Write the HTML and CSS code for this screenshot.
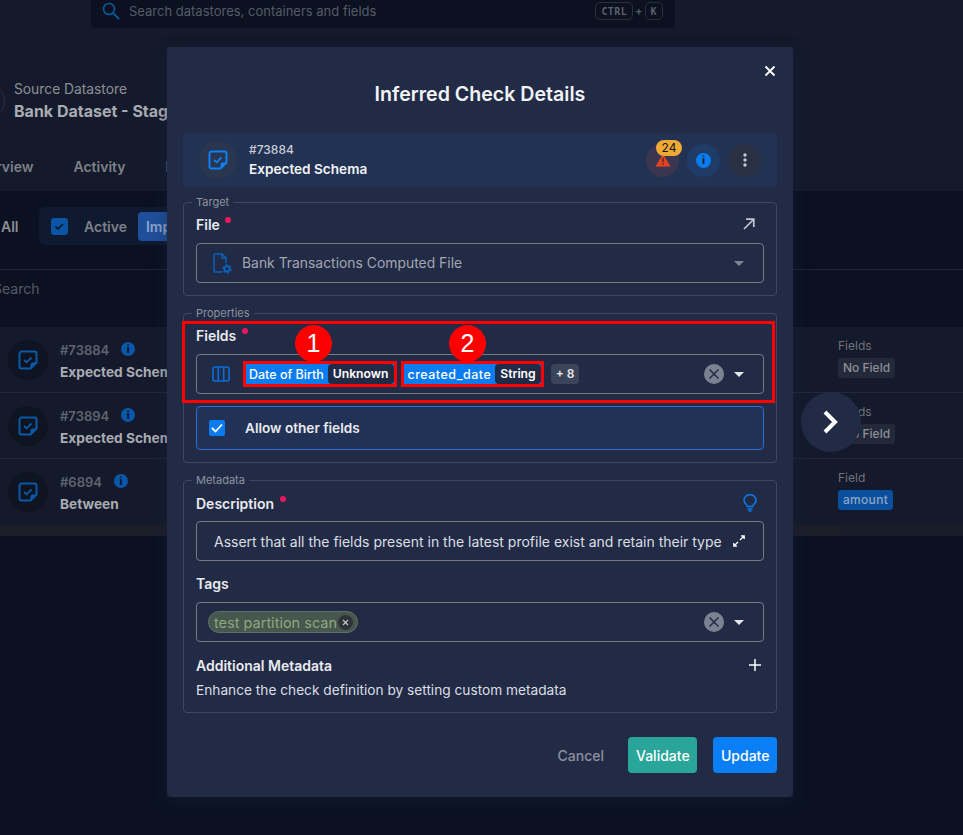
FILE: index.html
```html
<!DOCTYPE html>
<html lang="en">
<head>
    <meta charset="UTF-8">
    <meta name="viewport" content="width=device-width, initial-scale=1.0">
    <title>Inferred Check Details</title>
    <link rel="stylesheet" href="styles.css">
</head>
<body>
    <svg class="defs" width="0" height="0">
        <symbol id="check-icon" viewBox="0 0 20 20">
            <path d="M3.500 1.500h13a2 2 0 0 1 2 2v9l-6 6h-9a2 2 0 0 1-2-2v-13a2 2 0 0 1 2-2z" fill="none" stroke="currentColor" stroke-width="2"/>
            <path d="M18.500 12.500h-4a2 2 0 0 0-2 2v4z" fill="currentColor"/>
            <path d="M6 10l2.600 2.300L13.500 7.500" fill="none" stroke="currentColor" stroke-width="1.800"/>
        </symbol>
        <symbol id="clear-icon" viewBox="0 0 20 20">
            <circle cx="10" cy="10" r="10" fill="#7d8292"/>
            <path d="M5.500 5.500l9 9M14.500 5.500l-9 9" stroke="#222b46" stroke-width="1.500"/>
        </symbol>
    </svg>

    <div class="topbar">
        <div class="global-search">
            <svg class="search-icon" width="18" height="18" viewBox="0 0 18 18"><circle cx="7" cy="7" r="5.500" fill="none" stroke="currentColor" stroke-width="1.600"/><path d="M11 11l6 6" stroke="currentColor" stroke-width="1.800"/></svg>
            <span class="search-text">Search datastores, containers and fields</span>
            <span class="keys"><kbd>CTRL</kbd><i>+</i><kbd>K</kbd></span>
        </div>
    </div>

    <div class="page-head">
        <div class="datastore">
            <div class="datastore-logo"></div>
            <div>
                <div class="datastore-type">Source Datastore</div>
                <div class="datastore-name">Bank Dataset - Staging</div>
            </div>
        </div>
        <div class="tabs">
            <span>Overview</span>
            <span>Activity</span>
            <span>Profiles</span>
        </div>
    </div>

    <div class="filters">
        <span class="filter-all">All</span>
        <div class="filter-pill">
            <span class="filter-box"><svg width="11" height="11" viewBox="0 0 11 11"><path d="M1.500 5.500l2.500 2.500 5-5" fill="none" stroke="#0b1120" stroke-width="1.500"/></svg></span>
            <span class="filter-active">Active</span>
            <span class="filter-imp">Important</span>
        </div>
    </div>

    <div class="list-search">Search</div>

    <div class="table">
        <div class="row">
            <div class="row-icon"><svg width="20" height="20"><use href="#check-icon"/></svg></div>
            <div class="row-info">
                <div class="row-id">#73884 <span class="dot-info">i</span></div>
                <div class="row-name">Expected Schema</div>
            </div>
            <div class="row-fields">
                <div class="row-label">Fields</div>
                <span class="row-tag">No Field</span>
            </div>
        </div>
        <div class="row">
            <div class="row-icon"><svg width="20" height="20"><use href="#check-icon"/></svg></div>
            <div class="row-info">
                <div class="row-id">#73894 <span class="dot-info">i</span></div>
                <div class="row-name">Expected Schema</div>
            </div>
            <div class="row-fields">
                <div class="row-label">Fields</div>
                <span class="row-tag">No Field</span>
            </div>
        </div>
        <div class="row">
            <div class="row-icon"><svg width="20" height="20"><use href="#check-icon"/></svg></div>
            <div class="row-info">
                <div class="row-id">#6894 <span class="dot-info">i</span></div>
                <div class="row-name">Between</div>
            </div>
            <div class="row-fields">
                <div class="row-label">Field</div>
                <span class="row-tag row-tag-blue">amount</span>
            </div>
        </div>
        <div class="scrollbar"><div class="scrollbar-thumb"></div></div>
    </div>

    <button class="next-btn"><svg width="18" height="26" viewBox="0 0 18 26"><path d="M3 3l10 10L3 23" fill="none" stroke="#fff" stroke-width="4"/></svg></button>

    <div class="modal">
        <button class="close-btn"><svg width="12" height="12" viewBox="0 0 12 12"><path d="M1.500 1.500l9 9M10.500 1.500l-9 9" stroke="#fff" stroke-width="1.800"/></svg></button>
        <h1>Inferred Check Details</h1>

        <div class="check-band">
            <div class="check-icon"><svg width="20" height="20"><use href="#check-icon"/></svg></div>
            <div class="check-title">
                <div class="check-id">#73884</div>
                <div class="check-name">Expected Schema</div>
            </div>
            <div class="check-actions">
                <div class="round round-warn">
                    <span class="badge">24</span>
                    <svg width="16" height="14" viewBox="0 0 16 14"><path d="M8 1l7.500 12.500H.5z" fill="#e8431f"/><path d="M8 5v4M8 10.200v1.600" stroke="#3a2a35" stroke-width="1.400"/></svg>
                </div>
                <div class="round round-info"><span class="info-big">i</span></div>
                <div class="round round-more"><svg width="4" height="14" viewBox="0 0 4 14"><circle cx="2" cy="2" r="1.700"/><circle cx="2" cy="7" r="1.700"/><circle cx="2" cy="12" r="1.700"/></svg></div>
            </div>
        </div>

        <fieldset class="group group-target">
            <legend>Target</legend>
            <div class="label-row label-row-tight">
                <label>File <b class="req"></b></label>
                <svg class="open-icon" width="12" height="12" viewBox="0 0 12 12"><path d="M1 11L10.500 1.500M3 1.200h7.800V9" fill="none" stroke="#c4c7d0" stroke-width="1.700"/></svg>
            </div>
            <div class="input">
                <svg class="file-icon" width="20" height="21" viewBox="0 0 20 21"><path d="M10 19H3a1 1 0 0 1-1-1V2a1 1 0 0 1 1-1h7l4 4v5M10 1v4h4" fill="none" stroke="#0a62bc" stroke-width="1.500"/><circle cx="15" cy="16" r="3.400" fill="none" stroke="#0a62bc" stroke-width="2.800" stroke-dasharray="1.800 1.760"/><circle cx="15" cy="16" r="2.600" fill="none" stroke="#0a62bc" stroke-width="1.600"/></svg>
                <span class="input-muted">Bank Transactions Computed File</span>
                <span class="caret caret-dim"></span>
            </div>
        </fieldset>

        <fieldset class="group group-properties">
            <legend>Properties</legend>
            <div class="fields-block">
                <div class="label-row label-row-tight">
                    <label>Fields <b class="req"></b></label>
                </div>
                <div class="input">
                    <svg class="column-icon" width="18" height="16" viewBox="0 0 18 16"><rect x="1" y="1" width="16" height="14" rx="2" fill="none" stroke="#0a6fd8" stroke-width="1.600"/><path d="M6.300 1v14M11.700 1v14" stroke="#0a6fd8" stroke-width="1.600"/></svg>
                    <span class="chip"><span class="chip-name">Date of Birth</span><span class="chip-type">Unknown</span></span>
                    <span class="chip"><span class="chip-name chip-name-wide">created_date</span><span class="chip-type">String</span></span>
                    <span class="more">+ 8</span>
                    <svg class="clear" width="20" height="20"><use href="#clear-icon"/></svg>
                    <span class="caret"></span>
                </div>
                <span class="marker marker-one">1</span>
                <span class="marker marker-two">2</span>
            </div>
            <div class="allow">
                <span class="checkbox"><svg width="12" height="10" viewBox="0 0 12 10"><path d="M1 5l3.500 3.500L11 1.500" fill="none" stroke="#fff" stroke-width="1.800"/></svg></span>
                Allow other fields
            </div>
        </fieldset>

        <fieldset class="group">
            <legend>Metadata</legend>
            <div class="label-row">
                <label>Description <b class="req"></b></label>
                <svg class="bulb-icon" width="14" height="18" viewBox="0 0 14 18"><path d="M4.500 12.500C4.300 10.500 1 9.500 1 6.500a6 6 0 0 1 12 0c0 3-3.300 4-3.500 6z" fill="none" stroke="#0a7cf0" stroke-width="1.500"/><path d="M4.500 15h5M5.500 17h3" stroke="#0a7cf0" stroke-width="1.400"/></svg>
            </div>
            <div class="input">
                <span class="description">Assert that all the fields present in the latest profile exist and retain their type</span>
                <svg class="expand-icon" width="12" height="12" viewBox="0 0 12 12"><path d="M7 5l4-4M8 .8h3.200V4M5 7l-4 4M4 11.200H.8V8" fill="none" stroke="#fff" stroke-width="1.300"/></svg>
            </div>
            <div class="label-row label-row-gap">
                <label>Tags</label>
            </div>
            <div class="input">
                <span class="tag">test partition scan<span class="tag-x"><svg width="7" height="7" viewBox="0 0 7 7"><path d="M1 1l5 5M6 1L1 6" stroke="#c5c8cc" stroke-width="1.100"/></svg></span></span>
                <svg class="clear" width="20" height="20"><use href="#clear-icon"/></svg>
                <span class="caret"></span>
            </div>
            <div class="label-row label-row-extra">
                <label>Additional Metadata</label>
                <svg class="plus-icon" width="12" height="12" viewBox="0 0 12 12"><path d="M6 0v12M0 6h12" stroke="#fff" stroke-width="1.500"/></svg>
            </div>
            <p class="help">Enhance the check definition by setting custom metadata</p>
        </fieldset>

        <div class="modal-footer">
            <button class="btn-cancel">Cancel</button>
            <button class="btn btn-validate">Validate</button>
            <button class="btn btn-update">Update</button>
        </div>
    </div>
</body>
</html>
```

FILE: styles.css
```css
* {
    box-sizing: border-box;
}
html, body {
    height: 100%;
}
body {
    margin: 0;
    background-color: #0b1120;
    font-family: 'Inter', 'Liberation Sans', sans-serif;
    color: #a9abb2;
    overflow: hidden;
    position: relative;
}
.defs {
    position: absolute;
}

/* page behind the dialog */
.topbar {
    height: 39px;
    background-color: #141a2b;
    border-bottom: 1px solid #111727;
    padding-left: 91px;
}
.global-search {
    width: 584px;
    height: 28px;
    background-color: #0b1120;
    border-radius: 0 0 4px 4px;
    display: flex;
    align-items: center;
    padding: 0 12px 6px 11px;
}
.search-icon {
    color: #0a5a9e;
    margin-right: 9px;
}
.search-text {
    font-size: 13px;
    color: #565b68;
}
.keys {
    margin-left: auto;
    display: flex;
    align-items: center;
    gap: 2px;
}
.keys i {
    font-style: normal;
    font-size: 11px;
    font-weight: 700;
    color: #565b68;
}
kbd {
    font-family: 'DejaVu Sans Mono', monospace;
    font-size: 10px;
    font-weight: 700;
    color: #5c606b;
    border: 1px solid #2a2f3c;
    border-radius: 5px;
    height: 18px;
    min-width: 17px;
    padding: 0 5px;
    display: flex;
    align-items: center;
    justify-content: center;
    letter-spacing: 0.4px;
}
.page-head {
    height: 152px;
    background-color: #141a2b;
    padding-top: 40px;
}
.datastore {
    display: flex;
    align-items: center;
    gap: 9px;
    margin-left: -31px;
}
.datastore-logo {
    width: 36px;
    height: 36px;
    border-radius: 50%;
    border: 1px solid #2a3040;
}
.datastore-type {
    font-size: 13.800px;
    line-height: 20px;
    color: #8d8f95;
}
.datastore-name {
    font-size: 16px;
    font-weight: 700;
    line-height: 24px;
    color: #a9abb2;
    white-space: nowrap;
}
.tabs {
    display: flex;
    gap: 40px;
    margin: 35px 0 0 -31px;
    font-size: 14px;
    font-weight: 600;
    color: #7d8088;
}
.filters {
    display: flex;
    align-items: center;
    padding-top: 16px;
    height: 54px;
}
.filter-all {
    font-size: 14px;
    font-weight: 600;
    color: #8d8f95;
    margin-left: 1px;
    width: 38px;
}
.filter-pill {
    display: flex;
    align-items: center;
    height: 38px;
    background-color: #0f1a30;
    border-radius: 6px;
    padding: 0 4px 0 12px;
}
.filter-box {
    width: 17px;
    height: 17px;
    border-radius: 3px;
    background-color: #0a56a4;
    display: flex;
    align-items: center;
    justify-content: center;
}
.filter-active {
    font-size: 14px;
    font-weight: 600;
    color: #7d8088;
    margin: 0 11px 0 16px;
}
.filter-imp {
    font-size: 14px;
    font-weight: 600;
    color: #8fa5c8;
    background-color: #1f4f9a;
    border-radius: 4px;
    padding: 6px 8px;
}
.list-search {
    margin: 24px 0 0;
    height: 58px;
    border-top: 1px solid #1f2534;
    font-size: 14px;
    line-height: 38px;
    color: #565b68;
    text-indent: -7px;
}
.table {
    background-color: #141a2b;
}
.row {
    height: 66px;
    display: flex;
    align-items: center;
    padding-left: 8px;
    border-bottom: 1px solid #222839;
}
.row:nth-child(3) {
    border-bottom: 0;
}
.row-icon {
    width: 40px;
    height: 40px;
    border-radius: 50%;
    background-color: #0e1422;
    color: #0a5aa8;
    display: flex;
    align-items: center;
    justify-content: center;
}
.row-info {
    margin: 4px 0 0 12px;
}
.row-id {
    font-size: 13px;
    font-weight: 600;
    line-height: 20px;
    color: #5f636e;
    display: flex;
    align-items: center;
    gap: 12px;
}
.dot-info {
    width: 14px;
    height: 14px;
    margin-top: -2px;
    border-radius: 50%;
    background-color: #0a56a8;
    color: #0e1422;
    font-size: 10px;
    font-weight: 800;
    text-align: center;
    line-height: 14px;
}
.row-name {
    font-size: 13.700px;
    font-weight: 700;
    line-height: 24px;
    color: #a9abb2;
    white-space: nowrap;
}
.row-fields {
    margin: -4px 0 0 auto;
    width: 125px;
}
.row-label {
    font-size: 12px;
    line-height: 16px;
    color: #6f727b;
    margin-bottom: 2px;
}
.row-tag {
    display: inline-block;
    font-size: 12px;
    font-weight: 500;
    line-height: 20px;
    padding: 0 5px;
    border-radius: 3px;
    background-color: #23293a;
    color: #8d8f95;
}
.row-tag-blue {
    background-color: #0a4f9c;
    color: #8fa5c8;
    letter-spacing: 0.3px;
}
.scrollbar {
    height: 11px;
    background-color: #181d2a;
}
.scrollbar-thumb {
    width: 841px;
    height: 11px;
    background-color: #1c1e28;
    border-radius: 0 6px 6px 0;
}
.next-btn {
    position: absolute;
    left: 801px;
    top: 392px;
    width: 60px;
    height: 60px;
    border: 0;
    border-radius: 50%;
    background-color: #222b46;
    display: flex;
    align-items: center;
    justify-content: center;
    padding: 0;
}

/* dialog */
.modal {
    position: absolute;
    left: 167px;
    top: 47px;
    width: 626px;
    height: 750px;
    background-color: #222b46;
    border-radius: 4px;
    padding: 0 16px;
    box-shadow: 0 6px 16px rgba(26, 36, 66, 0.45);
}
.close-btn {
    position: absolute;
    right: 17px;
    top: 18px;
    background: none;
    border: 0;
    padding: 0;
    display: flex;
}
h1 {
    margin: 0;
    padding-top: 34px;
    height: 86px;
    font-size: 19.600px;
    line-height: 26px;
    font-weight: 600;
    text-align: center;
    color: #f2f3f6;
}
.check-band {
    height: 54px;
    background-color: #223253;
    border-radius: 4px;
    display: flex;
    align-items: center;
    padding: 0 16px;
}
.check-icon {
    width: 38px;
    height: 38px;
    border-radius: 50%;
    background-color: #2a3550;
    color: #0b82f5;
    display: flex;
    align-items: center;
    justify-content: center;
}
.check-title {
    margin-left: 12px;
}
.check-id {
    font-size: 12px;
    font-weight: 500;
    line-height: 18px;
    color: #c9ccd4;
}
.check-name {
    font-size: 13.600px;
    font-weight: 600;
    line-height: 20px;
    color: #f2f3f6;
}
.check-actions {
    margin-left: auto;
    display: flex;
    gap: 8px;
}
.round {
    position: relative;
    width: 33px;
    height: 33px;
    border-radius: 50%;
    display: flex;
    align-items: center;
    justify-content: center;
}
.round-warn {
    background-color: #3b3650;
}
.round-info {
    background-color: #1f3c69;
}
.round-more {
    background-color: #2a3044;
    fill: #c4c7d0;
}
.badge {
    position: absolute;
    top: -4px;
    left: 10px;
    width: 26px;
    height: 16px;
    border-radius: 8px;
    background-color: #eeaa33;
    color: #14161c;
    font-size: 12px;
    line-height: 16px;
    text-align: center;
}
.info-big {
    width: 15px;
    height: 15px;
    border-radius: 50%;
    background-color: #0a7cf0;
    color: #14253f;
    font-size: 11px;
    font-weight: 800;
    line-height: 15px;
    text-align: center;
}
.group {
    margin: 0;
    min-width: 0;
    padding: 6px 12px 12px;
    border: 1px solid #40485f;
    border-radius: 4px;
}
.check-band + .group {
    margin-top: 8px;
}
.group + .group {
    margin-top: 10px;
}
.group-target {
    padding-top: 5px;
}
.group-properties {
    padding-top: 0;
}
legend {
    margin-left: -4px;
    padding: 0 4px;
    font-size: 11px;
    line-height: 14px;
    color: #8d919e;
}
.label-row {
    height: 20px;
    margin-bottom: 8px;
    display: flex;
    align-items: center;
    justify-content: space-between;
}
.label-row-tight {
    margin-bottom: 9px;
}
.label-row-gap {
    margin-top: 12px;
    margin-bottom: 9px;
}
.label-row-extra {
    margin: 13px 0 5px;
}
label {
    font-size: 14px;
    font-weight: 600;
    color: #e9eaee;
}
.req {
    display: inline-block;
    width: 6px;
    height: 6px;
    border-radius: 50%;
    background-color: #e9185c;
    margin-left: 2px;
    vertical-align: 7px;
}
.open-icon {
    margin-right: 9px;
}
.bulb-icon {
    margin-right: 7px;
}
.plus-icon {
    margin-right: 3px;
}
.input {
    height: 40px;
    border: 1px solid #777a82;
    border-radius: 4px;
    display: flex;
    align-items: center;
    padding: 0 19px 0 12px;
    font-size: 14px;
}
.file-icon {
    margin-left: 3px;
}
.input-muted {
    margin-left: 10px;
    font-size: 13.900px;
    color: #a2a6b0;
}
.caret {
    width: 0;
    height: 0;
    border: 5.500px solid transparent;
    border-top: 5.500px solid #e6e7eb;
    border-bottom: 0;
    margin-left: 10px;
}
.caret-dim {
    margin-left: auto;
    border-top-color: #7f8491;
}
.fields-block {
    position: relative;
    margin-top: 5px;
    margin-bottom: 12px;
}
.fields-block::after {
    content: "";
    position: absolute;
    left: -14.500px;
    right: -11px;
    top: -4px;
    bottom: -9px;
    border: 3px solid #f00;
    pointer-events: none;
}
.column-icon {
    margin: 0 13px 0 3px;
}
.chip {
    display: flex;
    align-items: center;
    height: 26px;
    border: 3px solid #f00;
    background-color: #0a7cf0;
    font-size: 12.500px;
    font-weight: 500;
    color: #fff;
    margin-right: 4px;
    white-space: nowrap;
}
.chip-name {
    padding: 0 4px 0 3px;
}
.chip-name-wide {
    letter-spacing: 0.500px;
    padding-left: 4px;
}
.chip-type {
    height: 20px;
    line-height: 20px;
    padding: 0 5px;
    border-radius: 4px;
    background-color: #222b46;
    font-size: 12.200px;
    font-weight: 600;
}
.more {
    height: 20px;
    line-height: 20px;
    padding: 0 5px;
    margin-left: 3px;
    border-radius: 4px;
    background-color: #3c4459;
    color: #e9eaee;
    font-size: 12px;
    font-weight: 600;
}
.clear {
    margin-left: auto;
}
.marker {
    position: absolute;
    top: 0;
    width: 37px;
    height: 37px;
    border-radius: 50%;
    background-color: #f00;
    color: #fff;
    font-family: 'Liberation Sans', sans-serif;
    font-size: 25px;
    line-height: 37px;
    text-align: center;
}
.marker-one {
    left: 99px;
}
.marker-two {
    left: 253px;
}
.allow {
    height: 44px;
    border: 1px solid #2f6fd0;
    border-radius: 4px;
    background-color: #223257;
    display: flex;
    align-items: center;
    padding-left: 12px;
    font-size: 13.600px;
    font-weight: 600;
    color: #e9eaee;
}
.checkbox {
    width: 16px;
    height: 16px;
    border-radius: 2px;
    background-color: #0a7cf0;
    display: flex;
    align-items: center;
    justify-content: center;
    margin-right: 20px;
}
.description {
    margin-left: 5px;
    color: #dcdee3;
    white-space: nowrap;
}
.expand-icon {
    margin-left: auto;
    margin-right: -1px;
}
.tag {
    display: flex;
    align-items: center;
    height: 22px;
    margin-left: -1px;
    padding: 0 4px 0 5px;
    border: 1px solid #5f7061;
    border-radius: 11px;
    background-color: #46574f;
    color: #8fa67a;
    font-size: 14.500px;
    white-space: nowrap;
}
.tag-x {
    width: 15px;
    height: 15px;
    border-radius: 50%;
    background-color: #2f3338;
    margin-left: 1px;
    display: flex;
    align-items: center;
    justify-content: center;
}
.help {
    margin: 0;
    font-size: 13.700px;
    line-height: 20px;
    color: #dcdee3;
}
.modal-footer {
    margin-top: 24px;
    display: flex;
    justify-content: flex-end;
    align-items: center;
}
.btn-cancel {
    background: none;
    border: 0;
    padding: 0;
    font-family: inherit;
    font-size: 14px;
    font-weight: 500;
    color: #8d919e;
    margin-right: 24px;
}
.btn {
    height: 36px;
    border: 0;
    border-radius: 4px;
    font-family: inherit;
    font-size: 14px;
    font-weight: 500;
    color: #fff;
    padding: 0 8px;
}
.btn-validate {
    width: 69px;
    background-color: #29a699;
    margin-right: 16px;
}
.btn-update {
    width: 64px;
    background-color: #0a7ff5;
}
```
